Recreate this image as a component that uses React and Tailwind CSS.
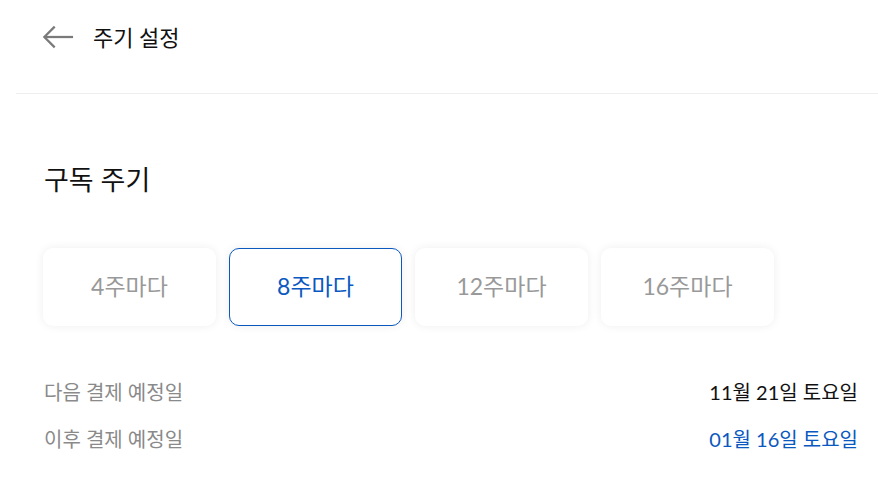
import { useState } from "react";

const cycles = [4, 8, 12, 16];

export default function App() {
  const [selected, setSelected] = useState(8);

  return (
    <div
      className="min-h-screen bg-white text-[#111]"
      style={{ fontFamily: 'Lato, "Noto Sans CJK KR", sans-serif' }}
    >
      {/* header */}
      <div className="flex h-[74px] items-center gap-[19px] px-[42px]">
        <button className="flex h-8 w-8 items-center justify-center">
          <svg width="34" height="26" viewBox="0 0 34 26" fill="none" stroke="#7a7a7a" strokeWidth="2.4">
            <path d="M33 13H3" />
            <path d="M13.5 2L2.5 13L13.5 24" />
          </svg>
        </button>
        <h1 className="text-[22px] font-normal">주기 설정</h1>
      </div>
      <div className="mt-[19px] ml-4 border-t border-[#eeeeee]" />

      <div className="pl-[44px] pr-[20px]">
        <h2 className="mt-[66px] text-[27px] font-normal">구독 주기</h2>

        <div className="mt-[47px] -ml-px flex gap-[13px]">
          {cycles.map((c) => (
            <button
              key={c}
              onClick={() => setSelected(c)}
              className={`flex h-[78px] w-[173px] items-center justify-center rounded-[10px] bg-white text-[23px] shadow-[0_0_10px_rgba(0,0,0,0.07)] ${
                selected === c
                  ? "border border-[#0a58c0] text-[#0a58c0]"
                  : "text-[#999999]"
              }`}
            >
              {c}주마다
            </button>
          ))}
        </div>

        <div className="mt-[51px] flex flex-col gap-[17px] text-[20px]">
          <div className="flex items-center justify-between">
            <span className="text-[#8a8a8a]">다음 결제 예정일</span>
            <span className="text-[#111]">11월 21일 토요일</span>
          </div>
          <div className="flex items-center justify-between">
            <span className="text-[#8a8a8a]">이후 결제 예정일</span>
            <span className="text-[#0a58c0]">01월 16일 토요일</span>
          </div>
        </div>
      </div>
    </div>
  );
}
